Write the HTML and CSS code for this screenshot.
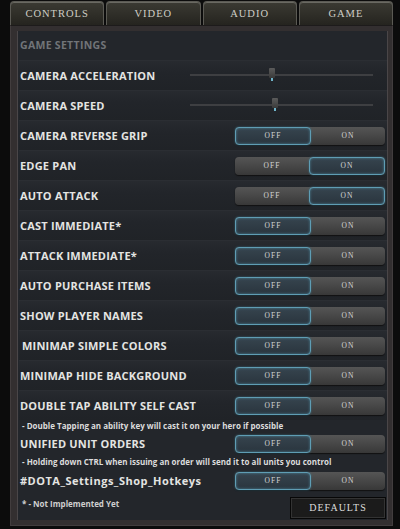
FILE: index.html
```html
<!DOCTYPE HTML>
<html>
	<head>
		<title>Game Settings</title>
		<meta charset="UTF-8">
		<link rel="stylesheet" href="styles.css">
	</head>
	<body>
		<div class="window">
			<div class="tabs">
				<div class="tab">CONTROLS</div>
				<div class="tab">VIDEO</div>
				<div class="tab">AUDIO</div>
				<div class="tab">GAME</div>
			</div>
			<div class="frame">
				<div class="panel">
					<div class="heading">GAME SETTINGS</div>

					<div class="row">
						<span class="label">CAMERA ACCELERATION</span>
						<div class="slider"><span class="thumb" style="left: 79px"></span></div>
					</div>
					<div class="row">
						<span class="label">CAMERA SPEED</span>
						<div class="slider"><span class="thumb" style="left: 82px"></span></div>
					</div>
					<div class="row">
						<span class="label">CAMERA REVERSE GRIP</span>
						<div class="toggle"><span class="half active">OFF</span><span class="half">ON</span></div>
					</div>
					<div class="row">
						<span class="label">EDGE PAN</span>
						<div class="toggle"><span class="half">OFF</span><span class="half active">ON</span></div>
					</div>
					<div class="row">
						<span class="label">AUTO ATTACK</span>
						<div class="toggle"><span class="half">OFF</span><span class="half active">ON</span></div>
					</div>
					<div class="row">
						<span class="label">CAST IMMEDIATE*</span>
						<div class="toggle"><span class="half active">OFF</span><span class="half">ON</span></div>
					</div>
					<div class="row">
						<span class="label">ATTACK IMMEDIATE*</span>
						<div class="toggle"><span class="half active">OFF</span><span class="half">ON</span></div>
					</div>
					<div class="row">
						<span class="label">AUTO PURCHASE ITEMS</span>
						<div class="toggle"><span class="half active">OFF</span><span class="half">ON</span></div>
					</div>
					<div class="row">
						<span class="label">SHOW PLAYER NAMES</span>
						<div class="toggle"><span class="half active">OFF</span><span class="half">ON</span></div>
					</div>
					<div class="row shifted">
						<span class="label">MINIMAP SIMPLE COLORS</span>
						<div class="toggle"><span class="half active">OFF</span><span class="half">ON</span></div>
					</div>
					<div class="row">
						<span class="label">MINIMAP HIDE BACKGROUND</span>
						<div class="toggle"><span class="half active">OFF</span><span class="half">ON</span></div>
					</div>
					<div class="row">
						<span class="label">DOUBLE TAP ABILITY SELF CAST</span>
						<div class="toggle"><span class="half active">OFF</span><span class="half">ON</span></div>
					</div>
					<div class="desc">- Double Tapping an ability key will cast it on your hero if possible</div>
					<div class="row short">
						<span class="label">UNIFIED UNIT ORDERS</span>
						<div class="toggle"><span class="half active">OFF</span><span class="half">ON</span></div>
					</div>
					<div class="desc tall">- Holding down CTRL when issuing an order will send it to all units you control</div>
					<div class="row short">
						<span class="label plain">#DOTA_Settings_Shop_Hotkeys</span>
						<div class="toggle"><span class="half active">OFF</span><span class="half">ON</span></div>
					</div>

					<div class="footer">
						<span class="note">* - Not Implemented Yet</span>
						<div class="defaults">DEFAULTS</div>
					</div>
				</div>
			</div>
		</div>
	</body>
</html>
```

FILE: styles.css
```css
body
	{
		margin: 0;
		background-color: #0c0c0c;
		font-family: "Open Sans", "DejaVu Sans", sans-serif;
	}

.window
	{
		margin-left: 10px;
		width: 383px;
	}

.tabs
	{
		display: flex;
		gap: 2px;
		height: 25px;
		padding-top: 1px;
		box-sizing: border-box;
	}
.tab
	{
		flex: 1;
		display: flex;
		align-items: center;
		justify-content: center;
		background: linear-gradient(#3b3a33, #25241f);
		border: 1px solid #5b5a54;
		border-bottom: none;
		border-radius: 4px 4px 0 0;
		box-shadow: inset 0 1px 0 #6a6962;
		font-family: "Liberation Serif", serif;
		font-size: 10.5px;
		letter-spacing: 1px;
		color: #cfcec6;
	}

.frame
	{
		padding: 5px 4px 5px 6px;
		background-color: #332f30;
		border: 1px solid #423d3e;
		border-top-color: #1d1b1b;
		height: 501px;
		box-sizing: border-box;
	}
.panel
	{
		height: 100%;
		background-color: #23262b;
		border-left: 1px solid #4a4648;
		border-right: 1px solid #4a4648;
		box-sizing: border-box;
		padding-left: 1px;
	}

.heading
	{
		height: 29px;
		line-height: 28px;
		padding-left: 1px;
		font-size: 10.5px;
		font-weight: bold;
		letter-spacing: 0.3px;
		color: #717478;
	}

.row
	{
		display: flex;
		align-items: center;
		justify-content: space-between;
		height: 30px;
		padding-left: 1px;
		background: linear-gradient(#272a2f, #22252a 40%, #202327);
		border-top: 1px solid #2b2e33;
		box-sizing: border-box;
	}
.row.shifted
	{
		padding-left: 3px;
	}
.row.short
	{
		height: 21px;
		background: none;
		border-top: none;
	}
.label
	{
		font-size: 11px;
		font-weight: bold;
		letter-spacing: 0.2px;
		color: #e4e4e2;
	}
.label.plain
	{
		letter-spacing: 0.5px;
	}

.slider
	{
		position: relative;
		width: 183px;
		height: 2px;
		margin-right: 14px;
		margin-top: -2px;
		background-color: #3e3f42;
	}
.slider .thumb
	{
		position: absolute;
		top: -6px;
		width: 6px;
		height: 10px;
		background: linear-gradient(#5b5b5b, #3a3a3a);
		border-radius: 1px;
	}
.slider .thumb::after
	{
		content: "";
		position: absolute;
		left: 2px;
		top: 10px;
		width: 2px;
		height: 3px;
		background-color: #6fb3c9;
	}

.toggle
	{
		display: flex;
		width: 150px;
		height: 18px;
		margin-right: 2px;
		border-radius: 4px;
		background: linear-gradient(#555, #444 60%, #383838);
		box-shadow: 0 1px 1px #111;
	}
.toggle .half
	{
		flex: 1;
		display: flex;
		align-items: center;
		justify-content: center;
		font-family: "Liberation Serif", serif;
		font-size: 7.5px;
		letter-spacing: 1px;
		color: #d4d4d4;
		border-radius: 4px;
	}
.toggle .half.active
	{
		background: linear-gradient(#36444e, #2a353e);
		border: 1px solid #5f9db4;
		box-shadow: inset 0 0 3px #4a7f94, 0 0 2px #3c6f82;
	}

.desc
	{
		height: 13px;
		line-height: 11px;
		padding-left: 3px;
		font-size: 8px;
		font-weight: bold;
		color: #dcdcdc;
	}
.desc.tall
	{
		height: 16px;
		line-height: 16px;
	}

.footer
	{
		display: flex;
		justify-content: space-between;
		align-items: flex-start;
		height: 28px;
		padding-left: 3px;
	}
.note
	{
		font-size: 8px;
		font-weight: bold;
		color: #cfcfcf;
		margin-top: 7px;
	}
.defaults
	{
		width: 94px;
		height: 20px;
		line-height: 20px;
		margin-right: 1px;
		margin-top: 6px;
		text-align: center;
		background-color: #1b1b1b;
		border: 1px solid #070707;
		box-shadow: inset 0 0 0 1px #333;
		font-family: "Liberation Serif", serif;
		font-size: 10px;
		letter-spacing: 1px;
		color: #dedede;
	}
```
